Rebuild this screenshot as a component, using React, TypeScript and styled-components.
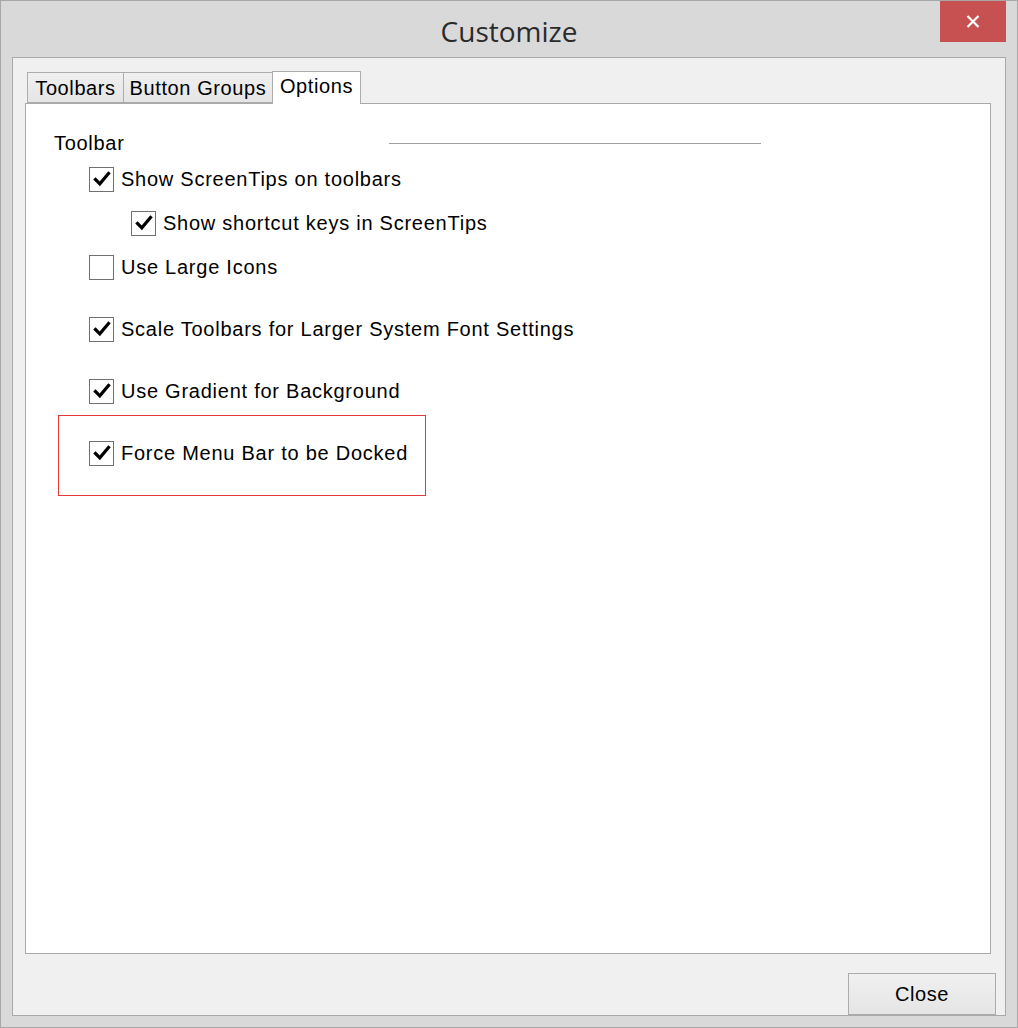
import React from "react";
import styled, { createGlobalStyle } from "styled-components";

const GlobalStyle = createGlobalStyle`
  html, body {
    margin: 0;
    padding: 0;
    background: #d9d9d9;
  }
  * {
    box-sizing: border-box;
  }
`;

// 창 전체 프레임
const Window = styled.div`
  width: 1018px;
  height: 1028px;
  display: flex;
  flex-direction: column;
  background: #d9d9d9;
  border: 1px solid #a7a7a7;
  font-family: "Liberation Sans", Arial, sans-serif;
  color: #000;
`;

// 제목 표시줄
const TitleBar = styled.div`
  height: 56px;
  display: grid;
  grid-template-columns: 1fr auto 1fr;
  padding: 0 11px;
`;

const Title = styled.div`
  grid-column: 2;
  align-self: start;
  margin-top: 10px;
  font-family: "Open Sans", "Noto Sans", sans-serif;
  font-size: 28px;
  line-height: 40px;
  color: #2b2b2b;
`;

const CloseGlyph = styled.button`
  grid-column: 3;
  justify-self: end;
  align-self: start;
  width: 66px;
  height: 41px;
  border: none;
  padding: 0;
  background: #c75050;
  display: flex;
  align-items: center;
  justify-content: center;
`;

// 클라이언트 영역
const Client = styled.div`
  flex: 1;
  margin: 0 11px 11px 11px;
  border: 1px solid #a9a9a9;
  background: #f0f0f0;
  display: flex;
  flex-direction: column;
  padding: 13px 9px 0 12px;
`;

const TabStrip = styled.div`
  display: flex;
  align-items: flex-end;
  height: 32px;
  margin-left: 2px;
  position: relative;
  z-index: 1;
`;

const Tab = styled.div<{ $active?: boolean; $width: number }>`
  width: ${(p) => p.$width}px;
  height: ${(p) => (p.$active ? "33px" : "31px")};
  margin-left: -1px;
  margin-bottom: ${(p) => (p.$active ? "-1px" : "0")};
  border: 1px solid #acacac;
  border-bottom: ${(p) => (p.$active ? "none" : "1px solid #acacac")};
  background: ${(p) =>
    p.$active ? "#ffffff" : "linear-gradient(#f0f0f0, #e5e5e5)"};
  font-size: 20px;
  letter-spacing: 0.6px;
  line-height: ${(p) => (p.$active ? "29px" : "30px")};
  text-align: center;
  white-space: nowrap;
  &:first-child {
    margin-left: 0;
  }
`;

const Panel = styled.div`
  height: 851px;
  margin-right: 5px;
  background: #ffffff;
  border: 1px solid #a9a9a9;
  padding: 27px 0 0 28px;
  display: flex;
  flex-direction: column;
`;

const GroupHeader = styled.div`
  display: grid;
  grid-template-columns: 335px 372px;
  align-items: center;
  height: 24px;
`;

const GroupLabel = styled.span`
  font-size: 20px;
  letter-spacing: 0.7px;
`;

const GroupLine = styled.div`
  height: 1px;
  background: #a0a0a0;
`;

const OptionRow = styled.label<{ $indent: number; $gap: number }>`
  display: flex;
  align-items: center;
  gap: 7px;
  height: 26px;
  margin-left: ${(p) => p.$indent}px;
  margin-top: ${(p) => p.$gap}px;
  font-size: 20px;
  letter-spacing: 0.75px;
  white-space: nowrap;
`;

const Box = styled.span`
  width: 25px;
  height: 25px;
  flex: none;
  border: 1px solid #707070;
  background: #ffffff;
  display: flex;
  align-items: center;
  justify-content: center;
`;

// 강조 표시 (빨간 테두리)
const Highlight = styled.div`
  width: 368px;
  height: 81px;
  margin: 11px 0 0 4px;
  border: 1px solid #e23a3a;
  padding-top: 24px;
`;

const Footer = styled.div`
  display: flex;
  justify-content: flex-end;
  margin-top: 19px;
`;

const PushButton = styled.button`
  width: 148px;
  height: 42px;
  border: 1px solid #acacac;
  background: linear-gradient(#f0f0f0, #e5e5e5);
  font-family: "Liberation Sans", Arial, sans-serif;
  font-size: 20px;
  letter-spacing: 0.6px;
  color: #000;
  padding: 0;
`;

const Check = () => (
  <svg width="18" height="16" viewBox="0 0 18 16">
    <path
      d="M2.5 8.5 L6.8 12.8 L15.5 2.5"
      fill="none"
      stroke="#000"
      strokeWidth="3.2"
      strokeLinecap="square"
      strokeLinejoin="miter"
    />
  </svg>
);

const CheckBox = ({ checked }: { checked: boolean }) => (
  <Box>{checked && <Check />}</Box>
);

const tabs = [
  { label: "Toolbars", width: 97 },
  { label: "Button Groups", width: 150 },
  { label: "Options", width: 89, active: true },
];

const options = [
  { label: "Show ScreenTips on toolbars", checked: true, indent: 35, gap: 11 },
  { label: "Show shortcut keys in ScreenTips", checked: true, indent: 77, gap: 18 },
  { label: "Use Large Icons", checked: false, indent: 35, gap: 18 },
  { label: "Scale Toolbars for Larger System Font Settings", checked: true, indent: 35, gap: 36 },
  { label: "Use Gradient for Background", checked: true, indent: 35, gap: 36 },
];

const App = () => {
  return (
    <>
      <GlobalStyle />
      <Window>
        <TitleBar>
          <Title>Customize</Title>
          <CloseGlyph aria-label="Close window">
            <svg width="14" height="13" viewBox="0 0 14 13">
              <path
                d="M1.5 1 L12.5 12 M12.5 1 L1.5 12"
                stroke="#fff"
                strokeWidth="2.2"
              />
            </svg>
          </CloseGlyph>
        </TitleBar>
        <Client>
          <TabStrip>
            {tabs.map((t) => (
              <Tab key={t.label} $width={t.width} $active={t.active}>
                {t.label}
              </Tab>
            ))}
          </TabStrip>
          <Panel>
            <GroupHeader>
              <GroupLabel>Toolbar</GroupLabel>
              <GroupLine />
            </GroupHeader>
            {options.map((o) => (
              <OptionRow key={o.label} $indent={o.indent} $gap={o.gap}>
                <CheckBox checked={o.checked} />
                {o.label}
              </OptionRow>
            ))}
            <Highlight>
              <OptionRow $indent={30} $gap={0}>
                <CheckBox checked />
                Force Menu Bar to be Docked
              </OptionRow>
            </Highlight>
          </Panel>
          <Footer>
            <PushButton>Close</PushButton>
          </Footer>
        </Client>
      </Window>
    </>
  );
};

export default App;
